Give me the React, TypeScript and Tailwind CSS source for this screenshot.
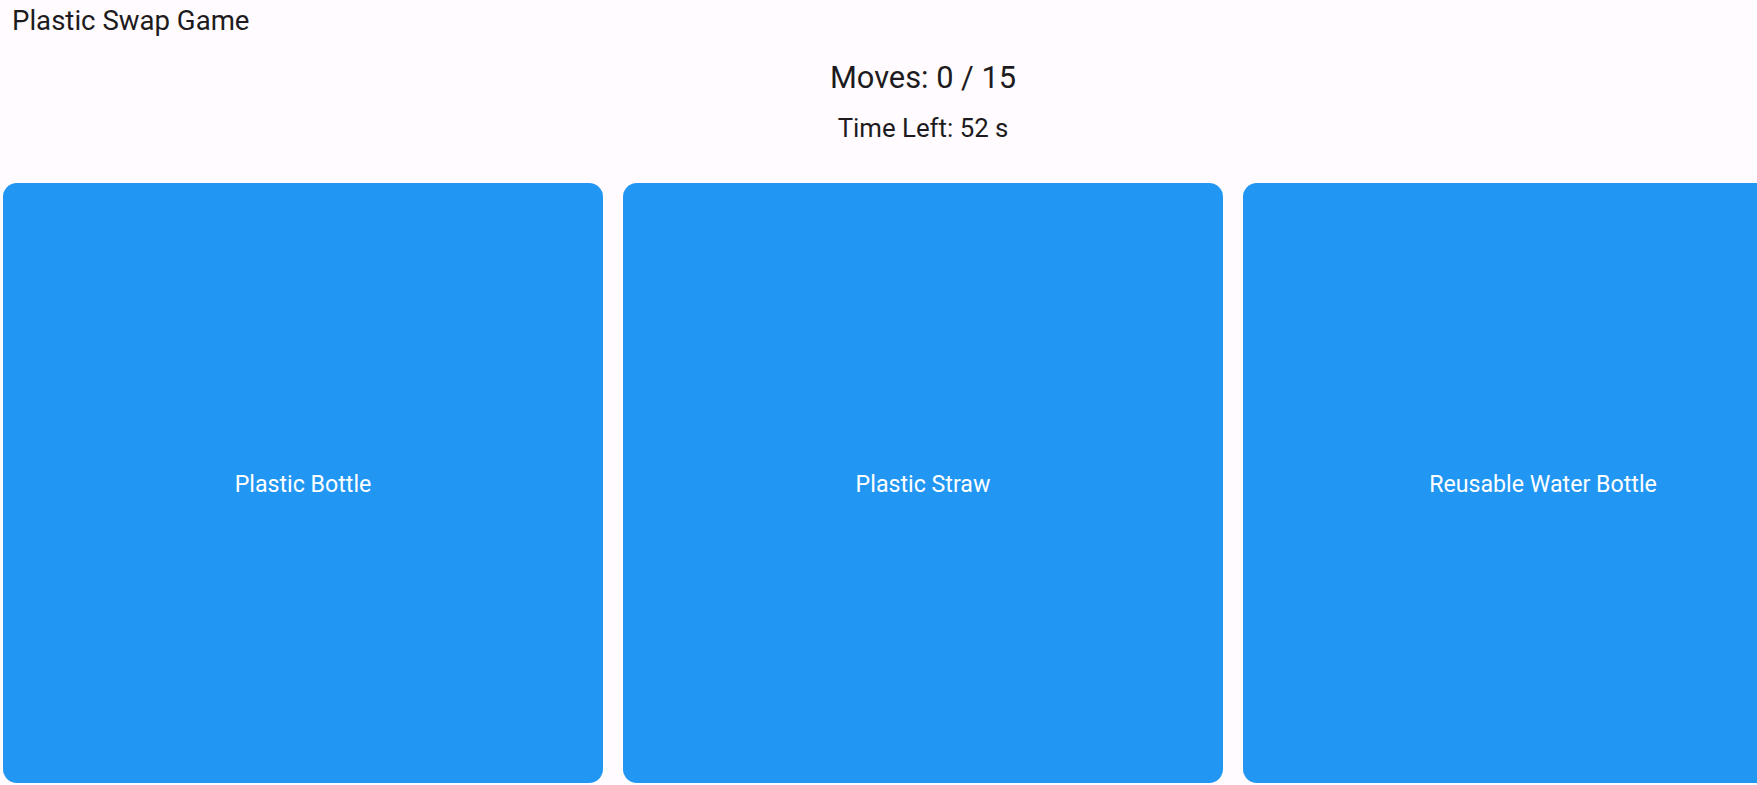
const items = ["Plastic Bottle", "Plastic Straw", "Reusable Water Bottle"];

const SwapCard = ({ label }: { label: string }) => {
  return (
    <div className="flex h-[600px] w-[600px] shrink-0 items-center justify-center rounded-[14px] bg-[#2196f3]">
      <span className="pt-[2px] text-[23.2px] leading-[27px] text-white">{label}</span>
    </div>
  );
};

export default function App() {
  return (
    <div className="h-[785px] w-full overflow-hidden bg-[#fffbfe] font-['Roboto',sans-serif] text-[#1d1b20]">
      <div className="pl-[12px] pt-[5px] text-[27.6px] leading-[32px]">Plastic Swap Game</div>
      <div className="flex w-[1846px] flex-col items-center">
        <div className="mt-[23px] text-[30.8px] leading-[36px]">Moves: 0 / 15</div>
        <div className="mt-[17px] text-[25.8px] leading-[30px]">Time Left: 52 s</div>
        <div className="mt-[40px] flex gap-[20px] px-[3px]">
          {items.map((item) => (
            <SwapCard key={item} label={item} />
          ))}
        </div>
      </div>
    </div>
  );
}
